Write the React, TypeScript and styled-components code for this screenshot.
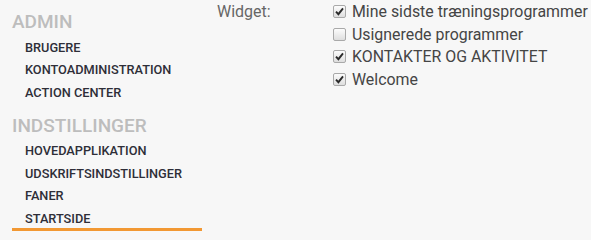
import React from 'react'
import styled, { createGlobalStyle } from 'styled-components'

const GlobalStyle = createGlobalStyle`
  html, body {
    margin: 0;
    padding: 0;
    background: #f7f7f7;
  }
  body {
    font-family: Roboto, "Liberation Sans", Arial, sans-serif;
  }
`

const sections = [
  { title: 'ADMIN', items: ['BRUGERE', 'KONTOADMINISTRATION', 'ACTION CENTER'] },
  {
    title: 'INDSTILLINGER',
    items: ['HOVEDAPPLIKATION', 'UDSKRIFTSINDSTILLINGER', 'FANER', 'STARTSIDE'],
  },
]

const widgets = [
  { label: 'Mine sidste træningsprogrammer', checked: true },
  { label: 'Usignerede programmer', checked: false },
  { label: 'KONTAKTER OG AKTIVITET', checked: true },
  { label: 'Welcome', checked: true },
]

export default function App() {
  return (
    <>
      <GlobalStyle />
      <Page>
        <Sidebar>
          {sections.map((section) => (
            <Section key={section.title}>
              <SectionTitle>{section.title}</SectionTitle>
              {section.items.map((item) => (
                <NavItem key={item} $active={item === 'STARTSIDE'}>
                  {item}
                </NavItem>
              ))}
            </Section>
          ))}
        </Sidebar>
        <Content>
          <FieldLabel>Widget:</FieldLabel>
          <CheckList>
            {widgets.map((w) => (
              <CheckRow key={w.label}>
                <Box $checked={w.checked}>
                  {w.checked && (
                    <svg width="9" height="9" viewBox="0 0 9 9">
                      <path
                        d="M1 4.6 L3.4 7.2 L8 1.4"
                        fill="none"
                        stroke="#2a2a2a"
                        strokeWidth="1.9"
                      />
                    </svg>
                  )}
                </Box>
                <CheckLabel>{w.label}</CheckLabel>
              </CheckRow>
            ))}
          </CheckList>
        </Content>
      </Page>
    </>
  )
}

const Page = styled.div`
  display: flex;
  width: 591px;
  height: 234px;
  overflow: hidden;
`

const Sidebar = styled.nav`
  width: 190px;
  margin-left: 12px;
  padding-top: 10px;
`

const Section = styled.div`
  & + & {
    margin-top: 9px;
  }
`

const SectionTitle = styled.h2`
  margin: 0 0 2.5px;
  font-size: 19px;
  line-height: 24px;
  font-weight: 500;
  color: #bdbdbd;
`

const NavItem = styled.div<{ $active?: boolean }>`
  height: 22.7px;
  line-height: 22.7px;
  padding-left: 13px;
  font-size: 12.75px;
  font-weight: 500;
  color: #2e2e38;
  box-shadow: ${(p) => (p.$active ? 'inset 0 -3px 0 #f29833' : 'none')};
`

const Content = styled.div`
  display: flex;
  margin-left: 15px;
`

const FieldLabel = styled.div`
  width: 116px;
  font-size: 16px;
  line-height: 24px;
  color: #666;
`

const CheckList = styled.div`
  display: flex;
  flex-direction: column;
  padding-top: 0.5px;
`

const CheckRow = styled.label`
  display: flex;
  align-items: center;
  height: 22.5px;
  gap: 6px;
`

const Box = styled.span<{ $checked: boolean }>`
  display: inline-flex;
  align-items: center;
  justify-content: center;
  width: 11px;
  height: 11px;
  border: 1px solid #a9a9a9;
  border-radius: 2px;
  background: linear-gradient(#fcfcfc, #dedede);
`

const CheckLabel = styled.span`
  font-size: 15.9px;
  color: #454545;
`
